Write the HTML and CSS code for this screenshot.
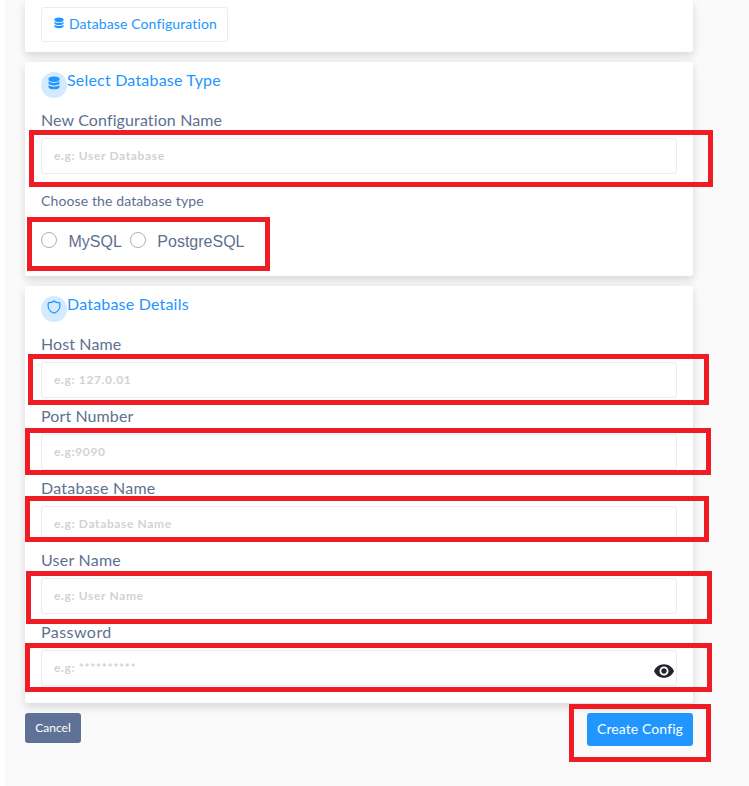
FILE: index.html
```html
<!DOCTYPE html>
<html lang="en">
<head>
<meta charset="utf-8">
<title>Database Configuration</title>
<link rel="stylesheet" href="styles.css">
</head>
<body>
<svg class="sprite" aria-hidden="true">
  <symbol id="database" viewBox="0 0 12 13">
    <path d="M6 0C9 0 11.500 .9 11.500 2.300V3.300C11.500 4.700 9 5.500 6 5.500S.5 4.700 .5 3.300V2.300C.5.900 3 0 6 0Z"/>
    <path d="M.5 5.100C2.500 7 9.500 7 11.500 5.100V6.700C11.500 8.100 9 8.900 6 8.900S.5 8.100.5 6.700Z"/>
    <path d="M.5 8.700C2.500 10.600 9.500 10.600 11.500 8.700V10.400C11.500 11.900 9 12.800 6 12.800S.5 11.900.5 10.400Z"/>
  </symbol>
</svg>
<main class="page">
  <section class="card tabs">
    <a class="tab"><svg class="tab-icon"><use href="#database"/></svg><span>Database Configuration</span></a>
  </section>

  <section class="card type-card">
    <h2 class="heading"><span class="badge"><svg class="badge-icon"><use href="#database"/></svg></span><span class="title">Select Database Type</span></h2>
    <div class="field">
      <label class="label label-config" for="config">New Configuration Name</label>
      <input class="input" id="config" placeholder="e.g: User Database">
      <i class="mark mark-config"></i>
    </div>
    <p class="hint">Choose the database type</p>
    <div class="radios">
      <label class="radio"><input type="radio" name="db"><span>MySQL</span></label>
      <label class="radio"><input type="radio" name="db"><span>PostgreSQL</span></label>
      <i class="mark mark-radios"></i>
    </div>
  </section>

  <section class="card details-card">
    <h2 class="heading"><span class="badge"><svg class="badge-icon shield" viewBox="0 0 14 14"><path d="M7 .9C5.500 2.200 3.500 2.700 1.500 2.600C.3 7 2 11.500 7 13.200C12 11.500 13.700 7 12.500 2.600C10.500 2.700 8.500 2.200 7 .9Z"/></svg></span><span class="title">Database Details</span></h2>
    <div class="field">
      <label class="label label-tight" for="host">Host Name</label>
      <input class="input" id="host" placeholder="e.g: 127.0.01">
      <i class="mark mark-host"></i>
    </div>
    <div class="field">
      <label class="label label-tight" for="port">Port Number</label>
      <input class="input" id="port" placeholder="e.g:9090">
      <i class="mark mark-port"></i>
    </div>
    <div class="field">
      <label class="label" for="dbname">Database Name</label>
      <input class="input" id="dbname" placeholder="e.g: Database Name">
      <i class="mark mark-dbname"></i>
    </div>
    <div class="field">
      <label class="label" for="user">User Name</label>
      <input class="input" id="user" placeholder="e.g: User Name">
      <i class="mark mark-user"></i>
    </div>
    <div class="field">
      <label class="label label-wide" for="pass">Password</label>
      <input class="input" id="pass" type="password" placeholder="e.g: **********">
      <svg class="eye" viewBox="1 4.500 22 15"><path fill-rule="evenodd" d="M12 4.500C7 4.500 2.730 7.610 1 12c1.730 4.390 6 7.500 11 7.500s9.270-3.110 11-7.500c-1.730-4.390-6-7.500-11-7.500zM12 17c-2.760 0-5-2.240-5-5s2.240-5 5-5 5 2.240 5 5-2.240 5-5 5zm0-8c-1.660 0-3 1.340-3 3s1.340 3 3 3 3-1.340 3-3-1.340-3-3-3z"/></svg>
      <i class="mark mark-pass"></i>
    </div>
  </section>

  <footer class="actions">
    <button class="btn cancel">Cancel</button>
    <div class="submit"><button class="btn create">Create Config</button><i class="mark mark-create"></i></div>
  </footer>
</main>
</body>
</html>
```
FILE: styles.css
```css
* { box-sizing: border-box; }
body {
  margin: 0;
  background: #fff;
  color: #5e7090;
  font-family: Lato, "Noto Sans", sans-serif;
  overflow: hidden;
}
.sprite { display: none; }
.page {
  display: flex;
  flex-direction: column;
  gap: 10px;
  height: 786px;
  margin-left: 5px;
  padding: 0 56px 0 20px;
  background: #fafafa;
}
.card {
  padding: 0 16px;
  background: #fff;
  border-radius: 3px;
  box-shadow: 0 4px 10px rgba(0, 0, 0, .14);
}
.tabs { height: 52px; padding-top: 7px; }
.type-card { height: 214px; }
.details-card { height: 417px; }
.tab {
  display: flex;
  align-items: center;
  width: 187px;
  height: 35px;
  padding: 0 0 2px 12px;
  border: 1px solid #ebecee;
  border-radius: 3px;
  color: #2196ff;
  font-size: 14px;
  letter-spacing: .12px;
  white-space: nowrap;
}
.tab-icon { width: 10px; height: 12px; margin: 0 5px 1px 0; fill: currentColor; }
.heading {
  display: flex;
  height: 40px;
  margin: 0;
  padding-top: 6px;
  color: #2196ff;
  font-size: 16px;
  font-weight: 400;
  line-height: 24px;
}
.badge {
  display: flex;
  justify-content: center;
  width: 26px;
  height: 26px;
  margin-top: 4px;
  padding-top: 4px;
  border-radius: 50%;
  background: #d3eaff;
}
.badge-icon { width: 12px; height: 14px; fill: currentColor; }
.shield { width: 14px; fill: none; stroke: currentColor; stroke-width: 1.300; stroke-linejoin: round; }
.title { letter-spacing: .2px; }
.field { position: relative; height: 72px; }
.label { display: block; font-size: 16px; line-height: 36px; letter-spacing: .24px; }
.label-config { letter-spacing: .12px; }
.label-tight { letter-spacing: .1px; }
.label-wide { letter-spacing: .45px; }
.input {
  display: block;
  width: 100%;
  height: 36px;
  padding: 0 12px 2px;
  border: 1px solid #ebecee;
  border-radius: 3px;
  background: #fff;
  font: 700 12px Lato, "Noto Sans", sans-serif;
  letter-spacing: .64px;
  outline: 0;
}
.input::placeholder { color: #d2d2d2; opacity: 1; }
.hint { margin: 17px 0 0; font-size: 14px; line-height: 20px; letter-spacing: .12px; }
.radios {
  position: relative;
  display: flex;
  gap: 8px;
  height: 36px;
  margin-top: 11px;
  padding-top: 10px;
  font: 16px/20px "Liberation Sans", sans-serif;
}
.radio { display: flex; gap: 11.500px; height: 18px; }
.radio input {
  appearance: none;
  width: 16px;
  height: 16px;
  margin: 0;
  border: 1px solid #a5b1c2;
  border-radius: 50%;
}
.eye { position: absolute; left: 613px; top: 50px; width: 20px; height: 14px; fill: #212529; }
.actions { display: flex; justify-content: space-between; align-items: flex-start; }
.btn {
  padding: 0 0 2px;
  border: 0;
  border-radius: 3px;
  color: #fff;
  font-family: Lato, "Noto Sans", sans-serif;
}
.cancel { width: 56px; height: 30px; background: #5e7297; font-size: 12px; }
.submit { position: relative; display: flex; }
.create { width: 106px; height: 33px; background: #2196ff; font-size: 14px; letter-spacing: .1px; }
.mark { position: absolute; z-index: 2; border: 5px solid #ee1c24; pointer-events: none; }
.mark-config { left: -12px; top: 28px; width: 684px; height: 57px; }
.mark-radios { left: -14px; top: -5px; width: 243px; height: 54px; }
.mark-host { left: -13px; top: 28px; width: 681px; height: 51px; }
.mark-port { left: -16px; top: 30px; width: 686px; height: 47px; }
.mark-dbname { left: -16px; top: 26px; width: 684px; height: 46px; }
.mark-user { left: -15px; top: 29px; width: 686px; height: 53px; }
.mark-pass { left: -16px; top: 29px; width: 687px; height: 49px; }
.mark-create { left: -18px; top: -9px; width: 142px; height: 58px; }
```
